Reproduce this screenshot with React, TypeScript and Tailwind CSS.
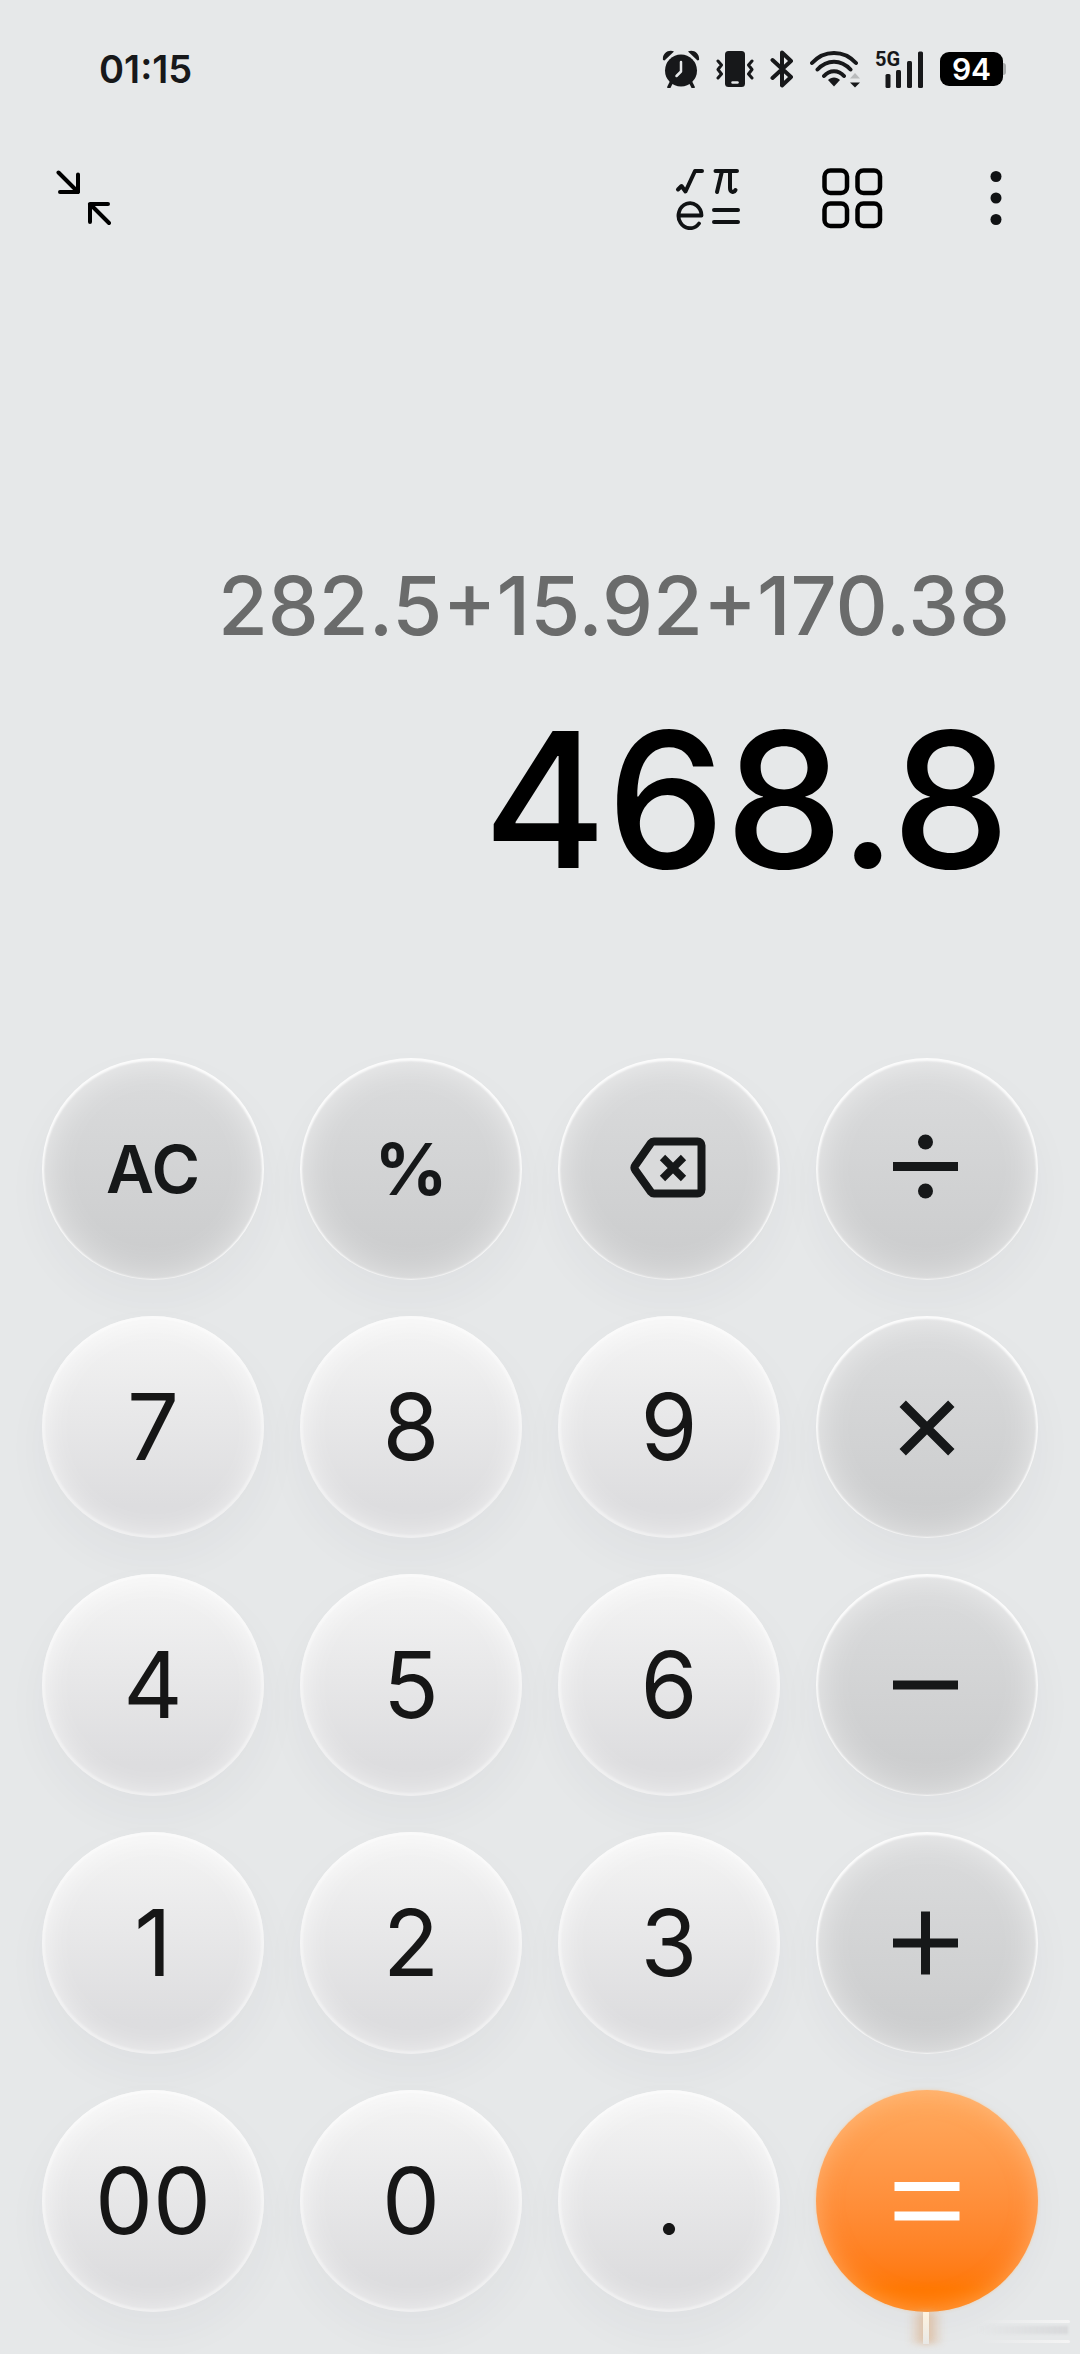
import type { ReactNode } from 'react';
import clsx from 'clsx';

type KeyVariant = 'number' | 'function' | 'operator' | 'equals';

interface CalculatorKey {
  label: string;
  variant: KeyVariant;
  content: ReactNode;
}

const variantClasses: Record<KeyVariant, string> = {
  number:
    'text-[92px] text-[#161616] bg-linear-to-b from-[#f3f3f3] from-5% to-[#dddddf] to-85% shadow-[inset_0_0_2px_3px_rgba(255,255,255,0.35),inset_0_3px_30px_rgba(255,255,255,0.75),0_20px_44px_rgba(60,60,70,0.04)]',
  function:
    'text-[66px] font-semibold text-[#161819] bg-linear-to-b from-[#dbdcdd] to-[#cacbcc] shadow-[inset_0_1px_2px_2px_rgba(255,255,255,0.85),inset_0_0_36px_rgba(255,255,255,0.6),0_20px_44px_rgba(60,60,70,0.04)]',
  operator:
    'text-[#161819] bg-linear-to-b from-[#dbdcdd] to-[#cacbcc] shadow-[inset_0_1px_2px_2px_rgba(255,255,255,0.85),inset_0_0_36px_rgba(255,255,255,0.6),0_20px_44px_rgba(60,60,70,0.04)]',
  equals:
    'text-white bg-linear-to-b from-[#ffab60] to-[#ff7700] to-90% shadow-[inset_0_0_24px_rgba(255,200,150,0.55),0_0_3px_rgba(255,190,120,0.6),0_10px_36px_rgba(60,60,70,0.04)]',
};

function Symbol({ children }: { children: ReactNode }) {
  return (
    <svg viewBox="0 0 74 74" className="size-[74px]" fill="none" stroke="currentColor" strokeWidth="9" aria-hidden="true">
      {children}
    </svg>
  );
}

function BackspaceIcon() {
  return (
    <svg viewBox="0 0 80 80" className="size-20" fill="none" stroke="currentColor" aria-hidden="true">
      <path
        d="M25 12.5H68.5a4 4 0 0 1 4 4V60.5a4 4 0 0 1-4 4H25a4 4 0 0 1-3-1.500L6.500 41.500a4.500 4.500 0 0 1 0-5.500L22 14a4 4 0 0 1 3-1.500Z"
        fill="#d9dadb"
        strokeWidth="8"
      />
      <path d="M33.500 28.500 54.500 49.500M54.500 28.500 33.500 49.500" strokeWidth="7.500" />
    </svg>
  );
}

const keys: CalculatorKey[] = [
  { label: 'All clear', variant: 'function', content: 'AC' },
  { label: 'Percent', variant: 'function', content: <span className="text-[72px] font-bold">%</span> },
  { label: 'Backspace', variant: 'operator', content: <BackspaceIcon /> },
  {
    label: 'Divide',
    variant: 'operator',
    content: (
      <Symbol>
        <path d="M3 34.500H68" />
        <circle cx="35.500" cy="10" r="7.500" fill="currentColor" stroke="none" />
        <circle cx="35.500" cy="59" r="7.500" fill="currentColor" stroke="none" />
      </Symbol>
    ),
  },
  { label: '7', variant: 'number', content: '7' },
  { label: '8', variant: 'number', content: '8' },
  { label: '9', variant: 'number', content: '9' },
  {
    label: 'Multiply',
    variant: 'operator',
    content: (
      <Symbol>
        <path d="M12.700 13.700 61.300 62.300M61.300 13.700 12.700 62.300" />
      </Symbol>
    ),
  },
  { label: '4', variant: 'number', content: '4' },
  { label: '5', variant: 'number', content: '5' },
  { label: '6', variant: 'number', content: '6' },
  {
    label: 'Subtract',
    variant: 'operator',
    content: (
      <Symbol>
        <path d="M3 37H68" />
      </Symbol>
    ),
  },
  { label: '1', variant: 'number', content: '1' },
  { label: '2', variant: 'number', content: '2' },
  { label: '3', variant: 'number', content: '3' },
  {
    label: 'Add',
    variant: 'operator',
    content: (
      <Symbol>
        <path d="M3 37H68M35.500 5.500V68.500" />
      </Symbol>
    ),
  },
  { label: '00', variant: 'number', content: '00' },
  { label: '0', variant: 'number', content: '0' },
  { label: 'Decimal point', variant: 'number', content: '.' },
  {
    label: 'Equals',
    variant: 'equals',
    content: (
      <Symbol>
        <path d="M4.500 22.500H69.500M4.500 52H69.500" />
      </Symbol>
    ),
  },
];

function StatusBar() {
  return (
    <div className="flex h-[138px] items-center justify-between pl-[99px] pr-[74px] text-[#17181a]">
      <span className="text-[38px] font-semibold">01:15</span>
      <div className="flex items-center gap-4">
        {/* Alarm */}
        <svg width="38" height="38" viewBox="0 0 38 38" fill="currentColor" aria-hidden="true">
          <path d="M1 10C0 4 6-1 12 1.500L2.500 10.500ZM37 10C38 4 32-1 26 1.500L35.500 10.500Z" />
          <circle cx="19" cy="20.500" r="16" />
          <path d="M9.500 32 7 37M28.500 32 31 37" stroke="currentColor" strokeWidth="3.500" strokeLinecap="round" />
          <path d="M19 12v9.500l-4.500 4.500" fill="none" stroke="#e6e8e9" strokeWidth="2.500" strokeLinecap="round" strokeLinejoin="round" />
        </svg>
        {/* Vibrate */}
        <svg width="38" height="38" viewBox="0 0 38 38" fill="none" stroke="currentColor" strokeWidth="3" strokeLinejoin="round" strokeLinecap="round" aria-hidden="true">
          <rect x="9" y="1" width="20" height="36" rx="3.500" fill="currentColor" stroke="none" />
          <path d="M16.500 32.500h5" stroke="#e6e8e9" strokeWidth="2.500" />
          <path d="M2 11l3.500 4L2 19.500 5.500 24 2 28M36 11l-3.500 4 3.500 4.500-3.500 4.500 3.500 4" />
        </svg>
        {/* Bluetooth */}
        <svg width="24" height="38" viewBox="0 0 24 38" fill="none" stroke="currentColor" strokeWidth="4" strokeLinejoin="round" strokeLinecap="round" aria-hidden="true">
          <path d="M2.500 10 21 27 12 35.500V2.500L21 11 2.500 28" />
        </svg>
        {/* Wi-Fi */}
        <svg width="50" height="38" viewBox="1 0 50 38" fill="none" stroke="currentColor" strokeWidth="4" strokeLinecap="round" aria-hidden="true">
          <path d="M3 13C15-.500 35-.500 47 13M8.500 19.500C18 9 32 9 41.500 19.500M15 26C20.500 19.500 29.500 19.500 35 26" />
          <path d="M25 36.500 19 30C22 26.500 28 26.500 31 30Z" fill="currentColor" stroke="none" />
          <path d="M41 28.500 46 23l5 5.500Z" fill="#b9bbbc" stroke="none" />
          <path d="M41 32.500h10l-5 5Z" fill="currentColor" stroke="none" />
        </svg>
        {/* Mobile signal */}
        <svg width="48" height="38" viewBox="0 0 48 38" fill="currentColor" aria-hidden="true" className="overflow-visible">
          <text x="-1" y="16" className="font-[Roboto,sans-serif] text-[20px] font-bold">5G</text>
          <rect x="9.500" y="24" width="5" height="14" rx="1.500" />
          <rect x="20" y="20" width="5" height="18" rx="1.500" />
          <rect x="31" y="11" width="5" height="27" rx="1.500" />
          <rect x="42" y="1.500" width="5" height="36.500" rx="1.500" />
        </svg>
        {/* Battery */}
        <div className="flex items-center">
          <span className="flex h-[34px] w-[63px] items-center justify-center rounded-[9px] bg-black text-[30px] font-semibold text-white">
            94
          </span>
          <span className="h-3 w-[3px] rounded-r-full bg-[#a9abac]" />
        </div>
      </div>
    </div>
  );
}

function Toolbar() {
  return (
    <nav className="flex h-[120px] items-center justify-between pl-14 pr-[54px] text-[#101214]">
      <button aria-label="Minimize window">
        <svg width="56" height="56" viewBox="0 0 56 56" fill="none" stroke="#000" strokeWidth="4" strokeLinecap="round" strokeLinejoin="round" aria-hidden="true">
          <path d="M2.500 2.500 22 22M22 4.500V22H4M53 53 34 34M34 52V34H52" />
        </svg>
      </button>
      <div className="flex items-center">
        <button aria-label="Scientific calculator">
          <svg width="66" height="64" viewBox="0 0 66 64" fill="none" stroke="currentColor" strokeWidth="4" strokeLinecap="round" strokeLinejoin="round" aria-hidden="true">
            <path d="M3 23.500 6.500 20 10.500 25.500 20 5H27" />
            <path d="M40.500 5H62M47 5 42 26M55 5V22C55 26.500 59 27 60.500 24" />
            <path d="M39 44H63M39 56H63" />
            <path d="M4 49.500H26.500A11.500 12.500 0 1 0 24 57.500" strokeWidth="3.800" />
          </svg>
        </button>
        <button aria-label="Converters" className="ml-20">
          <svg width="62" height="62" viewBox="0 0 62 62" fill="none" stroke="#000" strokeWidth="4.500" aria-hidden="true">
            <rect x="3.500" y="3.500" width="22.500" height="22.500" rx="6" />
            <rect x="36.500" y="3.500" width="22.500" height="22.500" rx="6" />
            <rect x="3.500" y="36.500" width="22.500" height="22.500" rx="6" />
            <rect x="36.500" y="36.500" width="22.500" height="22.500" rx="6" />
          </svg>
        </button>
        <button aria-label="More options" className="ml-[83px]">
          <svg width="60" height="60" viewBox="0 0 60 60" fill="currentColor" aria-hidden="true">
            <circle cx="30" cy="8.500" r="5.500" />
            <circle cx="30" cy="30" r="5.500" />
            <circle cx="30" cy="51.500" r="5.500" />
          </svg>
        </button>
      </div>
    </nav>
  );
}

function Display({ expression, result }: { expression: string; result: string }) {
  return (
    <section className="flex flex-col gap-[50px] pb-[166px] pl-10 pr-[70px] pt-[296px] text-right">
      <p className="text-[81px] leading-[104px] font-medium text-[#6a6b6b]">{expression}</p>
      <p className="text-[188px] leading-[184px] font-medium text-black">{result}</p>
    </section>
  );
}

function Keypad() {
  return (
    <section className="relative grid grid-cols-4 gap-9 px-[42px] pb-[42px]">
      {keys.map((key) => (
        <button
          key={key.label}
          aria-label={key.label}
          className={clsx(
            'flex aspect-square items-center justify-center rounded-full leading-none',
            variantClasses[key.variant]
          )}
        >
          {key.content}
        </button>
      ))}
      {/* Light streaks under the equals key */}
      <div className="absolute right-0 bottom-0 h-[42px] w-[180px]" aria-hidden="true">
        <div className="absolute top-0 left-2 h-8 w-9 bg-linear-to-r from-transparent via-[#dcb592] to-transparent opacity-80 blur-[3px]" />
        <div className="absolute top-0 left-[23px] h-8 w-[6px] bg-linear-to-b from-[#fff3df] to-[#e8e8e6]" />
        <div className="absolute top-2 right-[10px] h-[3px] w-[90px] rounded-full bg-linear-to-r from-transparent to-[#f4f4f4]" />
        <div className="absolute top-[14px] right-[12px] h-2 w-[90px] bg-linear-to-r from-transparent to-[#d8d9db] blur-[1px]" />
        <div className="absolute top-7 right-[10px] h-[3px] w-[90px] rounded-full bg-linear-to-r from-transparent to-[#f4f4f4]" />
      </div>
    </section>
  );
}

export default function App() {
  return (
    <main className="min-h-screen overflow-hidden bg-[#e6e8e9] font-[Inter,'Liberation_Sans',sans-serif]">
      <StatusBar />
      <Toolbar />
      <Display expression="282.5+15.92+170.38" result="468.8" />
      <Keypad />
    </main>
  );
}
